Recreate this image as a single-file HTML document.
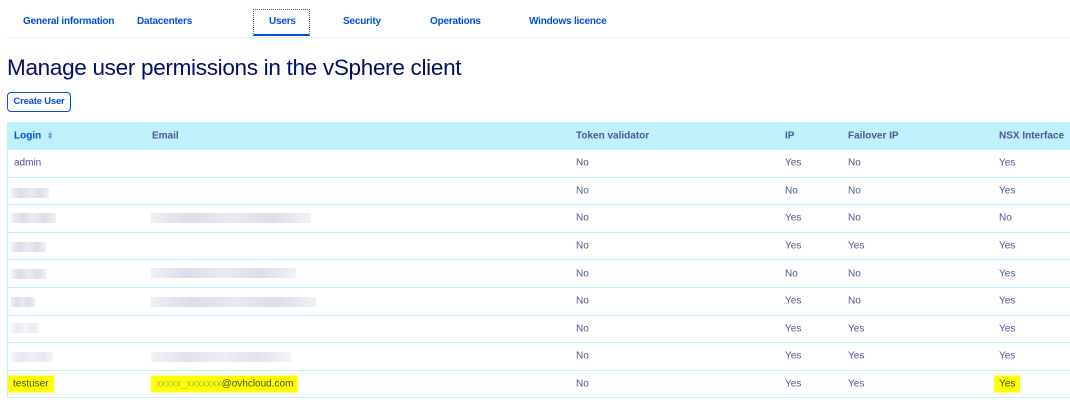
<!DOCTYPE html>
<html><head><meta charset="utf-8"><style>
*{margin:0;padding:0;box-sizing:border-box}
body{width:1070px;height:408px;background:#fff;font-family:"Liberation Sans",sans-serif;position:relative;overflow:hidden}
.tab{position:absolute;top:16px;font-size:10px;font-weight:bold;color:#0050d7;white-space:nowrap;letter-spacing:-0.2px}
.tabline{position:absolute;left:6px;top:37px;width:1064px;height:1px;background:#e6f3fb}
h1{position:absolute;left:7px;top:55px;font-size:22.5px;font-weight:normal;color:#000e66;letter-spacing:-0.3px;white-space:nowrap}
.btn{position:absolute;left:7px;top:92px;width:64px;height:20px;border:1px solid #0050d7;border-radius:4px;font-size:9.5px;font-weight:bold;color:#0050d7;line-height:18px;text-align:center;white-space:nowrap;letter-spacing:-0.2px}
.tbl{position:absolute;left:7px;top:122px;width:1063px;border-left:1px solid #bef1fc}
.hd{height:28px;background:#bef1fc;position:relative;font-size:10px;font-weight:bold;color:#4d5592}
.row{height:27.6px;border-bottom:1px solid #bef1fc;position:relative;font-size:10px;color:#4d5592}
.c{position:absolute;top:50%;transform:translateY(-50%);white-space:nowrap}
.hl{background:#ffff00;color:#4d4d00;padding:3px 5px;margin-left:-5px}
.bl{position:absolute;height:10px;background:linear-gradient(90deg,#ececf3,#d5d6e6,#e6e6ef,#d6d7e6,#eeeef4);opacity:.85}
</style></head><body>
<div class="tab" style="left:23px">General information</div>
<div class="tab" style="left:137px">Datacenters</div>
<div style="position:absolute;left:253px;top:9px;width:57px;height:27px;border:1px dotted #2a7d1a;border-bottom:2px solid #0050d7"></div>
<div class="tab" style="left:269px">Users</div>
<div class="tab" style="left:343px">Security</div>
<div class="tab" style="left:430px">Operations</div>
<div class="tab" style="left:529px">Windows licence</div>
<div class="tabline"></div>
<h1>Manage user permissions in the vSphere client</h1>
<div class="btn">Create User</div>
<div class="tbl">
<div class="hd"><span class="c" style="left:6px;color:#0050d7">Login &nbsp;<span style="font-size:8px;color:#7a9ad8">&#x2B0D;</span></span><span class="c" style="left:144px">Email</span><span class="c" style="left:568px">Token validator</span><span class="c" style="left:777px">IP</span><span class="c" style="left:840px">Failover IP</span><span class="c" style="left:991px">NSX Interface</span></div>
<div class="row"><span class="c" style="left:6px">admin</span><span class="c" style="left:568px">No</span><span class="c" style="left:777px">Yes</span><span class="c" style="left:840px">No</span><span class="c" style="left:991px">Yes</span></div>
<div class="row"><div class="bl" style="left:3px;top:10px;width:38px"></div><span class="c" style="left:568px">No</span><span class="c" style="left:777px">No</span><span class="c" style="left:840px">No</span><span class="c" style="left:991px">Yes</span></div>
<div class="row"><div class="bl" style="left:3px;top:8px;width:45px"></div><div class="bl" style="left:143px;top:8px;width:160px"></div><span class="c" style="left:568px">No</span><span class="c" style="left:777px">Yes</span><span class="c" style="left:840px">No</span><span class="c" style="left:991px">No</span></div>
<div class="row"><div class="bl" style="left:3px;top:9px;width:35px"></div><span class="c" style="left:568px">No</span><span class="c" style="left:777px">Yes</span><span class="c" style="left:840px">Yes</span><span class="c" style="left:991px">Yes</span></div>
<div class="row"><div class="bl" style="left:3px;top:9px;width:36px"></div><div class="bl" style="left:143px;top:8px;width:145px"></div><span class="c" style="left:568px">No</span><span class="c" style="left:777px">No</span><span class="c" style="left:840px">No</span><span class="c" style="left:991px">Yes</span></div>
<div class="row"><div class="bl" style="left:3px;top:9px;width:24px"></div><div class="bl" style="left:143px;top:9px;width:165px"></div><span class="c" style="left:568px">No</span><span class="c" style="left:777px">Yes</span><span class="c" style="left:840px">No</span><span class="c" style="left:991px">Yes</span></div>
<div class="row"><div class="bl" style="left:3px;top:7px;width:28px;opacity:.5"></div><span class="c" style="left:568px">No</span><span class="c" style="left:777px">Yes</span><span class="c" style="left:840px">Yes</span><span class="c" style="left:991px">Yes</span></div>
<div class="row"><div class="bl" style="left:3px;top:9px;width:42px;opacity:.6"></div><div class="bl" style="left:143px;top:9px;width:140px;opacity:.7"></div><span class="c" style="left:568px">No</span><span class="c" style="left:777px">Yes</span><span class="c" style="left:840px">Yes</span><span class="c" style="left:991px">Yes</span></div>
<div class="row"><span class="c hl" style="left:5px">testuser</span><span class="c hl" style="left:148px"><span style="color:#b9b930">xxxxx_xxxxxxx</span>@ovhcloud.com</span><span class="c" style="left:568px">No</span><span class="c" style="left:777px">Yes</span><span class="c" style="left:840px">Yes</span><span class="c hl" style="left:991px">Yes</span></div>
</div>
</body></html>
